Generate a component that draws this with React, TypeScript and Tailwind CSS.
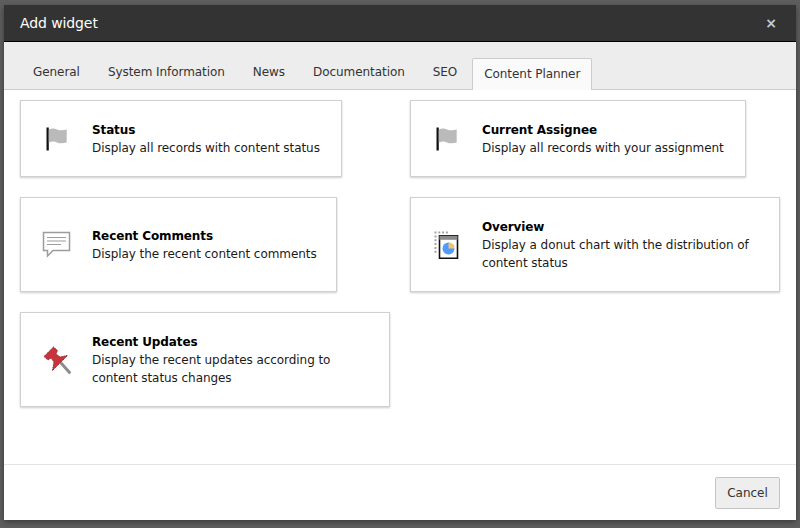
import type { ReactNode } from "react";

type Widget = {
  title: string;
  lines: string[];
  icon: ReactNode;
  width: string;
  height: string;
};

const FlagIcon = () => (
  <svg width="24" height="24" viewBox="0 0 24 24">
    <path d="M1.500.5h2.300v23H1.500z" fill="#111" />
    <path d="M3.800 2.500c3-1.500 5.700-1.300 8.200-.1 2.900 1.200 6.300 1.100 9.700.1v13c-3.400 1-6.800 1.100-9.700-.1-2.500-1.200-5.200-1.200-8.200.1z" fill="#bababa" />
  </svg>
);

const CommentIcon = () => (
  <svg width="30" height="28" viewBox="0 0 30 28" fill="none" stroke="#9c9c9c">
    <path d="M1.500 1.500h26v18H11l-5.500 5.500v-5.500h-4z" strokeWidth="1.500" />
    <path d="M5 6.500h19M5 10h19M5 13.500h14" strokeWidth="1.200" />
  </svg>
);

const PinIcon = () => (
  <svg width="30" height="30" viewBox="0 0 30 30">
    <path d="M19.500 18.500l8 9" stroke="#8c8c8c" strokeWidth="3" strokeLinecap="round" />
    <path d="M11.500 2L2 11.500l4 3.500 3-2 3 4-1.500 8.500 15-15-7.500 1.500-4-3 1.500-3.500z" fill="#c8343c" stroke="#8f2a2e" strokeWidth="1" strokeDasharray="1.500 .8" />
  </svg>
);

const ChartIcon = () => (
  <svg width="26" height="30" viewBox="0 0 26 30">
    <path d="M.5 1.500h2v2h-2zM4.300 1.500h2v2h-2zM8.100 1.500h2v2h-2zM11.900 1.500h2v2h-2zM.5 5.500h2v2h-2zM.5 9.300h2v2h-2zM.5 13.100h2v2h-2zM.5 16.900h2v2h-2zM.5 20.700h2v2h-2z" fill="#a3a3a3" />
    <path d="M5.500 5.800h18v22.500h-18z" fill="#fff" stroke="#111" strokeWidth="1.600" />
    <path d="M5.500 5.800h18v4h-18z" fill="#8a8a8a" />
    <circle cx="14.500" cy="18.500" r="6" fill="#4f9bff" />
    <path d="M14.500 12.500a6 6 0 0 1 6 6h-6z" fill="#f5c469" />
  </svg>
);

const widgets: Widget[] = [
  { title: "Status", lines: ["Display all records with content status"], icon: <FlagIcon />, width: "w-[322px]", height: "h-[77px]" },
  { title: "Current Assignee", lines: ["Display all records with your assignment"], icon: <FlagIcon />, width: "w-[336px]", height: "h-[77px]" },
  { title: "Recent Comments", lines: ["Display the recent content comments"], icon: <CommentIcon />, width: "w-[317px]", height: "h-[95px]" },
  { title: "Overview", lines: ["Display a donut chart with the distribution of", "content status"], icon: <ChartIcon />, width: "w-[370px]", height: "h-[95px]" },
  { title: "Recent Updates", lines: ["Display the recent updates according to", "content status changes"], icon: <PinIcon />, width: "w-[370px]", height: "h-[95px]" },
];

const tabs = ["General", "System Information", "News", "Documentation", "SEO"];

function WidgetCard({ widget }: { widget: Widget }) {
  return (
    <button
      className={`${widget.width} ${widget.height} flex items-center border border-[#d0d0d0] bg-white text-left shadow-[0_1px_2px_rgba(0,0,0,0.2)]`}
    >
      <span className="flex w-[71px] shrink-0 justify-center pl-[1px]">{widget.icon}</span>
      <span className="flex flex-col text-[12px] leading-[18px] tracking-[-0.06px] text-[#1a1a1a]">
        <span className="font-bold tracking-[-0.12px] text-black">{widget.title}</span>
        {widget.lines.map((line) => (
          <span key={line}>{line}</span>
        ))}
      </span>
    </button>
  );
}

export default function App() {
  return (
    <div className="h-[528px] w-[800px] overflow-hidden bg-[#5e5e5e] pl-[4px] pt-[5px] font-['DejaVu_Sans','Liberation_Sans',sans-serif]">
      <div className="flex h-[515px] w-[792px] flex-col bg-white shadow-[0_2px_6px_rgba(0,0,0,0.4)]">
        <div className="flex h-[37px] shrink-0 items-center justify-between border-b border-black bg-[#333333] pl-[16px] pr-[19px]">
          <h4 className="text-[14px] font-medium tracking-[-0.1px] text-white">Add widget</h4>
          <span className="text-[14px] font-bold leading-none text-[#c8c8c8]">×</span>
        </div>

        <div className="flex h-[48px] shrink-0 items-end border-b border-[#cccccc] bg-[#ededed] pl-[15px] tracking-[-0.06px]">
          {tabs.map((tab) => (
            <div key={tab} className="px-[14px] pb-[8px] text-[12px] leading-[18px] text-[#333333]">
              {tab}
            </div>
          ))}
          <div className="-mb-px ml-[1px] h-[32px] rounded-t-[2px] border border-b-0 border-[#cccccc] bg-[#fafafa] px-[11px] pt-[6px] text-[12px] leading-[18px] text-[#333333]">
            Content Planner
          </div>
        </div>

        <div className="grid flex-1 grid-cols-[390px_370px] content-start gap-x-0 gap-y-[20px] pl-[16px] pt-[10px]">
          {widgets.map((widget) => (
            <WidgetCard key={widget.title} widget={widget} />
          ))}
        </div>

        <div className="flex h-[56px] shrink-0 items-center justify-end border-t border-[#e3e3e3] pr-[16px]">
          <button className="h-[32px] w-[65px] rounded-[2px] border border-[#c4c4c4] bg-[#eeeeee] text-[12px] text-[#333333]">
            Cancel
          </button>
        </div>
      </div>
    </div>
  );
}
